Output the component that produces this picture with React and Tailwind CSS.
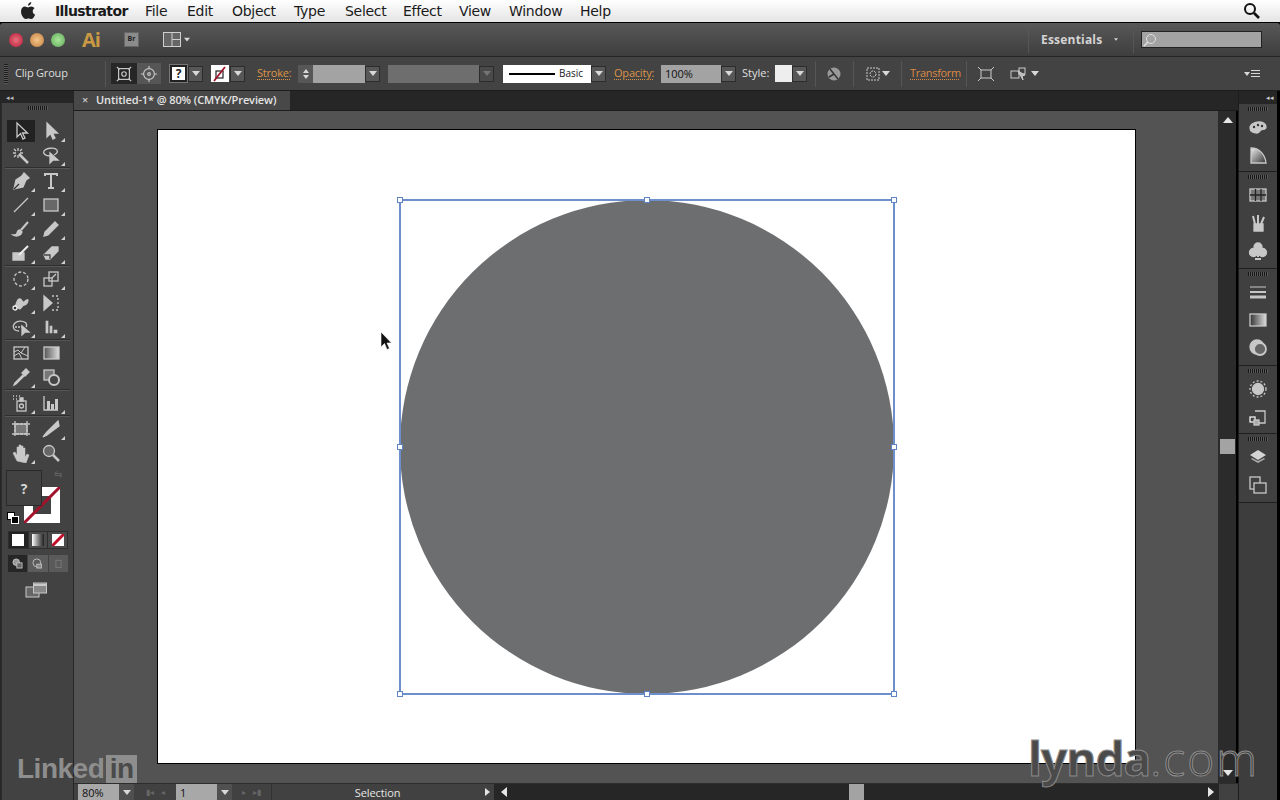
import React from 'react'

const menus = [
  ['File', 'w-[42px]'],
  ['Edit', 'w-[45px]'],
  ['Object', 'w-[62px]'],
  ['Type', 'w-[51px]'],
  ['Select', 'w-[58px]'],
  ['Effect', 'w-[56px]'],
  ['View', 'w-[50px]'],
  ['Window', 'w-[71px]'],
  ['Help', 'w-[50px]'],
]

function Arrow({ className = '' }) {
  return <div className={`w-0 h-0 border-x-[4px] border-x-transparent border-t-[5px] border-t-[#d8d8d8] ${className}`} />
}

function DropBtn({ dim }) {
  return (
    <div className={`w-[15px] h-[16px] flex items-center justify-center border border-[#2c2c2c] ${dim ? 'bg-[#4a4a4a]' : 'bg-[#575757]'}`}>
      <Arrow className={dim ? 'opacity-30' : ''} />
    </div>
  )
}

function Sep({ className = '' }) {
  return <div className={`w-px h-[26px] bg-[#565656] ${className}`} />
}

function Icon({ children, size = 20, className = '' }) {
  return (
    <svg width={size} height={size} viewBox="0 0 20 20" fill="none" stroke="#c8c8c8" strokeWidth="1.3" className={className}>
      {children}
    </svg>
  )
}

function Tool({ children, active, more }) {
  return (
    <div className={`relative w-[28px] h-[22px] flex items-center justify-center ${active ? 'bg-[#222222]' : ''}`}>
      <Icon>{children}</Icon>
      {more && <div className="absolute right-0 bottom-0 w-0 h-0 border-l-[4px] border-l-transparent border-b-[4px] border-b-[#d0d0d0]" />}
    </div>
  )
}

function ToolRow({ children }) {
  return <div className="flex items-center justify-between pl-[5px] pr-[8px] h-[24px]">{children}</div>
}

function Line() {
  return <div className="h-[2px] bg-[#2f2f2f] border-b border-[#565656] mx-[3px]" />
}

function Grip({ className = '' }) {
  return <div className={`h-[4px] w-[20px] mx-auto bg-[repeating-linear-gradient(90deg,#161616_0_1px,#5a5a5a_1px_2px)] ${className}`} />
}

function LeftToolbar() {
  return (
    <div className="w-[74px] shrink-0 flex flex-row bg-[#262626]">
      <div className="w-[72px] ml-[1px] flex flex-col">
        <div className="h-[12px] flex items-center pl-[5px] gap-px">
          <span className="text-[7px] leading-none text-[#bbbbbb]">◂◂</span>
        </div>
        <div className="flex-1 bg-[#424242] pt-[3px] border-l border-[#2c2c2c]">
          <Grip className="mb-[9px]" />
          <ToolRow>
            <Tool active><path d="M6 2v14l3.500-3.500 2.500 5.500 2-1-2.500-5h5z" /></Tool>
            <Tool more><path d="M6 2v14l3.500-3.500 2.500 5.500 2-1-2.500-5h5z" fill="#c8c8c8" /></Tool>
          </ToolRow>
          <ToolRow>
            <Tool><path d="M8 9l9 9" strokeWidth="2.500" /><path d="M7 3v3M7 10v3M2 8h3M9 8h3M3 4l2 2M11 4l-2 2M3 12l2-2" /></Tool>
            <Tool more><path d="M10 11C3 11 2 8 3 6c2-3 11-4 13-1 1 2-1 4-3 5" /><path d="M9 8v10l3-3h5z" fill="#c8c8c8" /></Tool>
          </ToolRow>
          <Line />
          <ToolRow>
            <Tool more><path d="M13 2l5 5-3 2-4-4z" fill="#c8c8c8" /><path d="M11 5L5 9 3 18l9-2 3-7z" fill="#c8c8c8" /><path d="M3 18l5-5" stroke="#333" /></Tool>
            <Tool more><path d="M4 5V3h12v2M10 3v14M7 17h6" strokeWidth="2" /></Tool>
          </ToolRow>
          <ToolRow>
            <Tool more><path d="M3 17L17 3" /></Tool>
            <Tool more><rect x="3" y="4" width="14" height="12" fill="#686868" /></Tool>
          </ToolRow>
          <ToolRow>
            <Tool more><path d="M17 3l-7 8" strokeWidth="2" /><path d="M9 11c-2 0-3 2-3 3s-2 2-4 2c3 2 8 1 9-3z" fill="#c8c8c8" /></Tool>
            <Tool more><path d="M14 3l3 3-10 10-4 1 1-4z" fill="#c8c8c8" /></Tool>
          </ToolRow>
          <ToolRow>
            <Tool more><path d="M2 10h11v7H2z" fill="#c8c8c8" /><path d="M8 12l9-9" strokeWidth="2" stroke="#eeeeee" /></Tool>
            <Tool more><path d="M3 12l8-8h6v4l-8 8H5z" fill="#c8c8c8" /><path d="M3 12h6v4" stroke="#444" /></Tool>
          </ToolRow>
          <Line />
          <ToolRow>
            <Tool more><circle cx="10" cy="10" r="7" strokeDasharray="3 2" /></Tool>
            <Tool more><rect x="3" y="9" width="8" height="8" /><rect x="8" y="3" width="9" height="9" /><path d="M11 9l4-4" /></Tool>
          </ToolRow>
          <ToolRow>
            <Tool more><path d="M3 15c3-2 2-8 5-9s3 4 5 3 2-3 4-2c0 3-2 5-4 5s-2 4-5 4" fill="#c8c8c8" /><circle cx="4" cy="15" r="2" fill="#333" stroke="#eee" /></Tool>
            <Tool><path d="M3 3l8 7-8 7z" fill="#c8c8c8" /><path d="M11 3h6v14h-6" strokeDasharray="2 2" /></Tool>
          </ToolRow>
          <ToolRow>
            <Tool more><path d="M8 14C2 14 1 9 4 6c3-3 9-2 11 0 1 2 1 3 0 4" /><path d="M4 10h8" strokeDasharray="2 1" /><path d="M11 9v9l3-3h4z" fill="#c8c8c8" /></Tool>
            <Tool more><path d="M4 3h4v14H4zM8 8h4v9H8zM12 12h5v5h-5z" fill="#c8c8c8" stroke="#444" /></Tool>
          </ToolRow>
          <Line />
          <ToolRow>
            <Tool><rect x="3" y="4" width="14" height="12" /><path d="M3 9l4-2 3 3 4-6M3 13l5-3 3 6M10 10l7 3" strokeWidth="1" /></Tool>
            <Tool><rect x="3" y="4" width="15" height="12" fill="url(#mesh)" /><defs><linearGradient id="mesh"><stop stopColor="#555" /><stop offset="1" stopColor="#ddd" /></linearGradient></defs></Tool>
          </ToolRow>
          <ToolRow>
            <Tool more><path d="M12 8l-8 8-1 2 2-1 8-8" fill="#eee" /><path d="M11 6l4-4 3 3-4 4z" fill="#c8c8c8" /></Tool>
            <Tool><rect x="3" y="3" width="10" height="10" fill="#777" /><circle cx="13" cy="13" r="5" fill="#444" strokeWidth="2" /></Tool>
          </ToolRow>
          <Line />
          <ToolRow>
            <Tool more><path d="M2 3h1M5 3h1M8 3h1M2 6h1M5 6h1" /><rect x="6" y="8" width="9" height="10" /><circle cx="10.500" cy="13" r="2" /><path d="M9 5h3v3H9z" fill="#c8c8c8" /></Tool>
            <Tool more><path d="M3 3v14h14" /><path d="M6 8h3v9H6zM10 11h3v6h-3zM14 6h3v11h-3z" fill="#c8c8c8" stroke="none" /></Tool>
          </ToolRow>
          <Line />
          <ToolRow>
            <Tool><rect x="4" y="5" width="12" height="10" fill="#777" /><path d="M1 5h18M1 15h18M4 2v16M16 2v16" strokeDasharray="3 1" /></Tool>
            <Tool more><path d="M17 2l1 5-12 9-4 2 4-5z" fill="#c8c8c8" /></Tool>
          </ToolRow>
          <ToolRow>
            <Tool more><path d="M6 18L2 10l2-1 2 3V4h2v5-7h2v7-6h2v7-5h2v9l2-3 2 1-3 8z" fill="#c8c8c8" strokeWidth=".5" /></Tool>
            <Tool><circle cx="8" cy="8" r="5.500" fill="#666" /><path d="M12 12l6 6" strokeWidth="2.500" /></Tool>
          </ToolRow>
          <div className="flex items-center justify-end pr-[11px] h-[16px] mt-[1px]">
            <span className="text-[10px] leading-none text-[#5f5f5f]">⇆</span>
          </div>
          <div className="relative h-[49px]">
            <div className="absolute left-[22px] top-[5px] w-[36px] h-[36px] bg-white">
              <div className="absolute left-[9px] top-[9px] w-[18px] h-[18px] bg-[#424242]" />
              <svg width="36" height="36" viewBox="0 0 36 36" className="absolute inset-0">
                <path d="M0 36L36 0" stroke="#a3122c" strokeWidth="3" />
              </svg>
            </div>
            <div className="absolute left-[4px] top-[-12px] w-[36px] h-[36px] bg-[#424242] border border-[#2a2a2a] flex items-center justify-center text-[14px] font-bold text-[#d5d5d5]">?</div>
            <div className="absolute left-[5px] top-[30px] w-[8px] h-[8px] bg-white border border-black" />
            <div className="absolute left-[9px] top-[34px] w-[8px] h-[8px] bg-black border border-white" />
          </div>
          <div className="ml-[6px] mr-[5px] flex h-[18px] border border-[#2e2e2e] gap-px bg-[#2e2e2e]">
            <div className="flex-1 bg-[#222222] flex items-center justify-center"><div className="w-[12px] h-[12px] bg-white" /></div>
            <div className="flex-1 bg-[#4a4a4a] flex items-center justify-center"><div className="w-[12px] h-[12px] bg-gradient-to-r from-white to-[#222222]" /></div>
            <div className="flex-1 bg-[#4a4a4a] flex items-center justify-center">
              <svg width="12" height="12" viewBox="0 0 12 12"><rect width="12" height="12" fill="#fff" /><path d="M0 12L12 0" stroke="#c0102c" strokeWidth="3" /></svg>
            </div>
          </div>
          <div className="ml-[6px] mr-[5px] mt-[6px] flex h-[17px] gap-px">
            <div className="flex-1 bg-[#262626] flex items-center justify-center"><Icon size={13}><circle cx="8" cy="8" r="5" fill="#999" /><rect x="9" y="9" width="8" height="8" fill="#666" /></Icon></div>
            <div className="flex-1 bg-[#5c5c5c] flex items-center justify-center"><Icon size={13}><circle cx="9" cy="9" r="6" /><rect x="9" y="11" width="7" height="6" fill="#888" /></Icon></div>
            <div className="flex-1 bg-[#5a5a5a] flex items-center justify-center"><Icon size={13} className="opacity-30"><rect x="6" y="5" width="8" height="11" /></Icon></div>
          </div>
          <div className="flex justify-center mt-[10px] pr-[4px]">
            <svg width="22" height="16" viewBox="0 0 22 16" fill="none" stroke="#c8c8c8">
              <rect x="1" y="5" width="13" height="10" fill="#666" />
              <rect x="8.500" y="1" width="13" height="10" fill="#888" />
              <path d="M8.500 3h13" strokeWidth="2" />
            </svg>
          </div>
        </div>
      </div>
    </div>
  )
}

function Artboard() {
  return (
    <div className="relative w-[979px] h-[635px] bg-white border border-black">
      <div className="absolute left-[242px] top-[70px] w-[494px] h-[494px]">
        <div className="w-full h-full rounded-full bg-[#6d6e70]" />
        <div className="absolute -inset-px border-2 border-[#6f8fcc]" />
        {[
          'left-[-3px] top-[-3px]', 'left-[244px] top-[-3px]', 'right-[-3px] top-[-3px]',
          'left-[-3px] top-[244px]', 'right-[-3px] top-[244px]',
          'left-[-3px] bottom-[-3px]', 'left-[244px] bottom-[-3px]', 'right-[-3px] bottom-[-3px]',
        ].map((pos) => (
          <div key={pos} className={`absolute w-[6px] h-[6px] bg-white border border-[#5f83c4] ${pos}`} />
        ))}
      </div>
      <svg width="12" height="20" viewBox="0 0 12 20" className="absolute left-[222px] top-[201px]">
        <path d="M1 1v15l3.500-3.500L7 18.500l2.500-1L7 12h4.500z" fill="#111" stroke="#fff" strokeWidth=".6" />
      </svg>
    </div>
  )
}

function VScroll() {
  return (
    <div className="w-[17px] shrink-0 bg-[#2b2b2b] flex flex-col items-center pt-[6px] pb-[7px]">
      <div className="w-0 h-0 border-x-[5px] border-x-transparent border-b-[6px] border-b-[#e6e6e6]" />
      <div className="w-[15px] h-[15px] bg-[#a3a3a3] mt-[316px]" />
      <div className="flex-1" />
      <div className="w-0 h-0 border-x-[5px] border-x-transparent border-t-[6px] border-t-[#e6e6e6]" />
    </div>
  )
}

function StatusBar() {
  return (
    <div className="h-[17px] shrink-0 flex items-stretch bg-[#414141] border-t border-[#2d2d2d] text-[11px] text-[#e6e6e6]">
      <div className="w-[41px] ml-[4px] bg-[#a8a8a8] text-[#111] pl-[4px] leading-[17px]">80%</div>
      <div className="w-[15px] flex items-center justify-center bg-[#505050]"><Arrow /></div>
      <div className="w-[42px] flex items-center justify-center gap-[7px] text-[8px] text-[#666666]">
        <span>▮◂</span><span>◂</span>
      </div>
      <div className="w-[41px] bg-[#a8a8a8] text-[#111] pl-[4px] leading-[17px]">1</div>
      <div className="w-[15px] flex items-center justify-center bg-[#505050]"><Arrow /></div>
      <div className="w-[40px] flex items-center justify-center gap-[7px] text-[8px] text-[#666666] border-r border-[#333333]">
        <span>▸</span><span>▸▮</span>
      </div>
      <div className="w-[208px] text-center leading-[17px] pl-[3px] tracking-[-0.1px]">Selection</div>
      <div className="w-[14px] flex items-center justify-center">
        <div className="w-0 h-0 border-y-[4px] border-y-transparent border-l-[5px] border-l-[#e6e6e6]" />
      </div>
      <div className="flex-1 bg-[#262626] flex items-center pl-[7px] pr-[5px] mr-[19px]">
        <div className="w-0 h-0 border-y-[5px] border-y-transparent border-r-[6px] border-r-[#e6e6e6]" />
        <div className="w-[15px] h-full bg-[#a3a3a3] ml-[342px]" />
        <div className="flex-1" />
        <div className="w-0 h-0 border-y-[5px] border-y-transparent border-l-[6px] border-l-[#e6e6e6]" />
      </div>
    </div>
  )
}

function DockGroup({ h, children }) {
  return (
    <div className={`${h} border-b border-[#1f1f1f] bg-[#404040] flex flex-col items-center pt-[3px] pr-[1px]`}>
      <Grip className="mb-[2px]" />
      {children}
    </div>
  )
}

function DockIcon({ children }) {
  return <div className="h-[28px] shrink-0 flex items-center justify-center"><Icon>{children}</Icon></div>
}

function RightDock() {
  return (
    <div className="w-[42px] shrink-0 flex flex-row bg-black">
      <div className="w-[39px] flex flex-col bg-[#3d3d3d] border-l border-[#1c1c1c]">
        <div className="h-[13px] bg-[#262626] flex items-center justify-end pr-[3px]">
          <span className="text-[7px] leading-none text-[#cccccc]">◂◂</span>
        </div>
        <DockGroup h="h-[68px]">
          <DockIcon><path d="M2 11c0-4 5-6 9-6s7 2 7 5-3 2-5 3-1 3-4 3-7-1-7-5z" fill="#c8c8c8" /><circle cx="6" cy="10" r="1.200" fill="#333" stroke="none" /><circle cx="10" cy="8" r="1.200" fill="#333" stroke="none" /><circle cx="14" cy="9" r="1.200" fill="#333" stroke="none" /></DockIcon>
          <DockIcon><path d="M3 3c8 0 14 6 15 15H3z" fill="url(#pie)" /><defs><linearGradient id="pie" x1="0" y1="0" x2="1" y2="1"><stop stopColor="#eee" /><stop offset="1" stopColor="#333" /></linearGradient></defs></DockIcon>
        </DockGroup>
        <DockGroup h="h-[97px]">
          <DockIcon><rect x="2" y="4" width="16" height="12" fill="#777" /><path d="M7.500 4v12M13 4v12M2 10h16" stroke="#222" /></DockIcon>
          <DockIcon><path d="M6 11h9v7H6z" fill="#c8c8c8" /><path d="M7 11L5 3M10 11V2M13 11l3-7" strokeWidth="2" /></DockIcon>
          <DockIcon><circle cx="10" cy="6" r="4" fill="#c8c8c8" /><circle cx="5.500" cy="11.500" r="4" fill="#c8c8c8" /><circle cx="14.500" cy="11.500" r="4" fill="#c8c8c8" /><path d="M10 8v8M7 18h6" strokeWidth="2" /></DockIcon>
        </DockGroup>
        <DockGroup h="h-[97px]">
          <DockIcon><path d="M2 5h16" strokeWidth="1" /><path d="M2 10h16" strokeWidth="2" /><path d="M2 15h16" strokeWidth="3" /></DockIcon>
          <DockIcon><rect x="2" y="4" width="16" height="12" fill="url(#grad)" /><defs><linearGradient id="grad"><stop stopColor="#333" /><stop offset="1" stopColor="#ddd" /></linearGradient></defs></DockIcon>
          <DockIcon><circle cx="9" cy="9" r="7" fill="#c8c8c8" /><circle cx="12" cy="11" r="6" fill="#666" strokeWidth="1.800" /></DockIcon>
        </DockGroup>
        <DockGroup h="h-[68px]">
          <DockIcon><circle cx="10" cy="10" r="5.500" fill="#c8c8c8" /><circle cx="10" cy="10" r="8" strokeDasharray="2 2" /></DockIcon>
          <DockIcon><path d="M7 4h10v12H9" /><rect x="2" y="10" width="5" height="5" stroke="#eee" /><rect x="6" y="13" width="5" height="5" fill="#aaa" /></DockIcon>
        </DockGroup>
        <DockGroup h="h-[69px]">
          <DockIcon><path d="M10 3l8 5-8 5-8-5z" fill="#d4d4d4" stroke="none" /><path d="M3 12l7 4 7-4-1-1-6 3-6-3z" fill="#aaa" stroke="none" /></DockIcon>
          <DockIcon><rect x="2" y="2" width="10" height="12" /><rect x="6" y="8" width="12" height="10" fill="#404040" /></DockIcon>
        </DockGroup>
        <div className="flex-1" />
      </div>
    </div>
  )
}

export default function App() {
  return (
    <div className="relative w-[1280px] h-[800px] overflow-hidden bg-black flex flex-col font-['Open_Sans','Liberation_Sans',sans-serif]">
      {/* mac menu bar */}
      <div className="h-[23px] shrink-0 bg-gradient-to-b from-white to-[#e4e4e4] border-b border-black flex items-center text-[14px] text-[#1a1a1a] font-['DejaVu_Sans',sans-serif] tracking-[-0.3px]">
        <svg width="16" height="18" viewBox="0 0 16 18" className="ml-[20px]" fill="#222222">
          <path d="M11 4.500c1.500 0 2.700.7 3.500 1.800-2.600 1.700-2.200 5.200.6 6.400-.8 2-2.300 4.300-3.800 4.300-1 0-1.500-.6-2.800-.6s-1.900.6-2.900.6C3.800 17 1 13 1 9.500 1 6.300 3 4.600 5 4.600c1.200 0 2.200.8 3 .8s1.800-.9 3-.9zM11.300 0c.2 1.800-1.600 3.800-3.300 3.700C7.800 2 9.500.2 11.300 0z" />
        </svg>
        <span className="ml-[19px] w-[90px] font-bold text-[14px] tracking-[-0.6px]">Illustrator</span>
        {menus.map(([name, w]) => (
          <span key={name} className={w}>{name}</span>
        ))}
        <div className="flex-1" />
        <svg width="18" height="18" viewBox="0 0 18 18" fill="none" stroke="#111111" strokeWidth="2" className="mr-[19px]">
          <circle cx="7" cy="7" r="5" />
          <path d="M11 11l5 5" strokeWidth="2.600" />
        </svg>
      </div>

      {/* application bar */}
      <div className="h-[34px] shrink-0 bg-gradient-to-b from-[#585858] to-[#3e3e3e] border-b border-[#262626] flex items-center rounded-tl-[3px] rounded-tr-[3px]">
        <div className="ml-[9px] w-[14px] h-[14px] rounded-full bg-[radial-gradient(circle,#e8707f,#b51a35)]" />
        <div className="ml-[7px] w-[14px] h-[14px] rounded-full bg-[radial-gradient(circle,#f4c68c,#c27d3a)]" />
        <div className="ml-[7px] w-[14px] h-[14px] rounded-full bg-[radial-gradient(circle,#a9e59a,#5fa858)]" />
        <span className="ml-[17px] w-[20px] text-[20px] leading-none font-bold text-[#c99a43] tracking-[-1px]">Ai</span>
        <div className="ml-[22px] w-[15px] h-[15px] bg-[#8b8b8b] border border-[#666666] flex items-center justify-center text-[7px] text-[#222222] font-bold">Br</div>
        <svg width="18" height="15" viewBox="0 0 18 15" fill="none" stroke="#cfcfcf" className="ml-[24px]">
          <rect x=".5" y=".5" width="17" height="14" fill="#666666" />
          <path d="M9 .5v14M9 7.500h8.500" />
        </svg>
        <Arrow className="ml-[2px] scale-75" />
        <div className="flex-1" />
        <Sep className="mr-[12px]" />
        <span className="w-[63px] text-[12px] font-bold text-[#d4d4d4] tracking-[0.2px]">Essentials</span>
        <Arrow className="ml-[8px] scale-50" />
        <Sep className="ml-[13px]" />
        <div className="ml-[7px] mr-[18px] w-[121px] h-[17px] bg-[#a3a3a3] border border-[#222222] flex items-center pl-[1px]">
          <svg width="14" height="14" viewBox="0 0 14 14" fill="none" stroke="#e0e0e0">
            <circle cx="8" cy="6" r="4.500" />
            <path d="M5 9l-4 4" strokeWidth="1.500" />
          </svg>
        </div>
      </div>

      {/* control bar */}
      <div className="h-[34px] shrink-0 bg-[#434343] border-b border-[#1d1d1d] flex items-center text-[11px] text-[#dcdcdc]">
        <div className="ml-[4px] w-[4px] h-[20px] bg-[repeating-linear-gradient(180deg,#1c1c1c_0_1px,#5a5a5a_1px_2px)]" />
        <span className="ml-[7px] w-[90px] text-[#dddddd] tracking-[-0.2px]">Clip Group</span>
        <Sep />
        <div className="ml-[5px] w-[50px] h-[21px] flex">
          <div className="w-[26px] bg-[#262626] flex items-center justify-center">
            <Icon size={18}><rect x="4" y="4" width="12" height="12" /><circle cx="10" cy="10" r="2.500" /><path d="M2 2l3 3M18 2l-3 3M2 18l3-3M18 18l-3-3" /></Icon>
          </div>
          <div className="w-[24px] bg-[#565656] flex items-center justify-center">
            <Icon size={18}><circle cx="10" cy="10" r="6" /><circle cx="10" cy="10" r="1.500" /><path d="M10 1v3M10 16v3M1 10h3M16 10h3" /></Icon>
          </div>
        </div>
        <div className="ml-[9px] w-[17px] h-[17px] bg-white border-2 border-[#222222] outline outline-[#777] flex items-center justify-center text-[12px] font-bold text-[#222222]">?</div>
        <div className="ml-px"><DropBtn /></div>
        <div className="ml-[8px] w-[18px] h-[17px] bg-white flex items-center justify-center">
          <svg width="16" height="16" viewBox="0 0 16 16" fill="none">
            <rect x="4" y="5" width="7" height="7" stroke="#222" strokeWidth="1.200" />
            <path d="M2 15L13 1" stroke="#a3122c" strokeWidth="1.800" />
          </svg>
        </div>
        <div className="ml-px"><DropBtn /></div>
        <span className="ml-[12px] w-[41px] text-[#dd9447] underline decoration-dotted underline-offset-2 tracking-[-0.2px]">Stroke:</span>
        <div className="w-[15px] h-[18px] bg-[#575757] flex flex-col items-center justify-center gap-[2px]">
          <div className="w-0 h-0 border-x-[3px] border-x-transparent border-b-[4px] border-b-[#d8d8d8]" />
          <div className="w-0 h-0 border-x-[3px] border-x-transparent border-t-[4px] border-t-[#d8d8d8]" />
        </div>
        <div className="w-[52px] h-[18px] bg-[#a3a3a3]" />
        <DropBtn />
        <div className="ml-[8px] w-[91px] h-[18px] bg-[#6e6e6e]" />
        <DropBtn dim />
        <div className="ml-[9px] w-[88px] h-[18px] bg-white flex items-center pl-[6px] text-[#222222] text-[10px]">
          <div className="w-[46px] h-[2px] bg-black" />
          <span className="ml-[4px]">Basic</span>
        </div>
        <DropBtn />
        <span className="ml-[8px] w-[47px] text-[#dd9447] underline decoration-dotted underline-offset-2 tracking-[-0.2px]">Opacity:</span>
        <div className="w-[60px] h-[18px] bg-[#a3a3a3] text-[#111111] pl-[4px] leading-[17px]">100%</div>
        <DropBtn />
        <span className="ml-[6px] w-[33px] text-[#e0e0e0]">Style:</span>
        <div className="w-[17px] h-[17px] bg-[#eeeeee]" />
        <DropBtn />
        <Sep className="ml-[8px]" />
        <svg width="14" height="14" viewBox="0 0 14 14" className="ml-[11px]">
          <circle cx="7" cy="7" r="6.500" fill="#999999" />
          <path d="M7 7L3 2M7 7l4 5M7 7l-5 3" stroke="#333333" strokeWidth="1.500" />
        </svg>
        <Sep className="ml-[12px]" />
        <svg width="14" height="14" viewBox="0 0 14 14" fill="none" stroke="#cccccc" strokeDasharray="2 1" className="ml-[12px]">
          <rect x="1" y="1" width="12" height="12" />
          <circle cx="7" cy="7" r="3" />
        </svg>
        <Arrow className="ml-[2px]" />
        <Sep className="ml-[11px]" />
        <span className="ml-[8px] w-[56px] text-[#dd8a45] underline decoration-dotted underline-offset-2 tracking-[-0.3px]">Transform</span>
        <Sep />
        <svg width="16" height="14" viewBox="0 0 16 14" fill="none" stroke="#cccccc" className="ml-[11px]">
          <rect x="3" y="3" width="10" height="8" />
          <path d="M0 0l3 3M16 0l-3 3M0 14l3-3M16 14l-3-3" />
        </svg>
        <svg width="16" height="14" viewBox="0 0 16 14" fill="none" stroke="#cccccc" className="ml-[16px]">
          <rect x="1" y="4" width="8" height="7" />
          <rect x="9" y="1" width="6" height="6" />
          <path d="M8 4l7 4-3 1 1 4z" fill="#bbbbbb" />
        </svg>
        <Arrow className="ml-[5px]" />
        <div className="flex-1" />
        <div className="mr-[20px] flex items-center gap-[1px]">
          <div className="w-0 h-0 border-x-[3px] border-x-transparent border-t-[4px] border-t-[#d8d8d8]" />
          <div className="w-[9px] h-[8px] bg-[repeating-linear-gradient(180deg,#d8d8d8_0_1px,transparent_1px_3px)]" />
        </div>
      </div>

      {/* work area */}
      <div className="flex-1 flex flex-row min-h-0">
        <LeftToolbar />
        <div className="w-[1164px] shrink-0 flex flex-col">
          <div className="h-[20px] shrink-0 bg-[#262626] border-b border-[#1c1c1c]">
            <div className="w-[216px] h-full bg-[#484848] flex items-center text-[11px] font-semibold text-[#e4e4e4] tracking-[-0.1px]">
              <span className="ml-[8px] w-[14px] text-[11px] text-[#cccccc]">×</span>
              <span>Untitled-1* @ 80% (CMYK/Preview)</span>
            </div>
          </div>
          <div className="flex-1 flex flex-row min-h-0">
            <div className="flex-1 bg-[#535353] pl-[83px] pt-[18px] border-r border-[#2a2a2a]">
              <Artboard />
            </div>
            <VScroll />
            <div className="w-[2px] bg-black" />
          </div>
          <StatusBar />
        </div>
        <RightDock />
      </div>

      {/* watermarks */}
      <div className="absolute left-[17px] top-[755px] flex items-center font-['Liberation_Sans',sans-serif] font-bold text-[28px] leading-none text-[#8e8e8e] tracking-[-0.5px]">
        <span>Linked</span>
        <span className="ml-[2px] w-[31px] h-[28px] bg-[#8e8e8e] text-[#4a4a4a] flex items-end justify-center text-[28px] leading-[28px]">in</span>
      </div>
      <div className="absolute left-[1028px] top-[735px] font-['Open_Sans',sans-serif] text-[46px] leading-none tracking-[-1px]">
        <span className="font-bold text-[#4a4a4a] [-webkit-text-stroke:1px_#8a8a8a]">lynda</span>
        <span className="font-light text-[#3e3e3e] tracking-[2px] [-webkit-text-stroke:1px_#8e8e8e]">.com</span>
      </div>
    </div>
  )
}
